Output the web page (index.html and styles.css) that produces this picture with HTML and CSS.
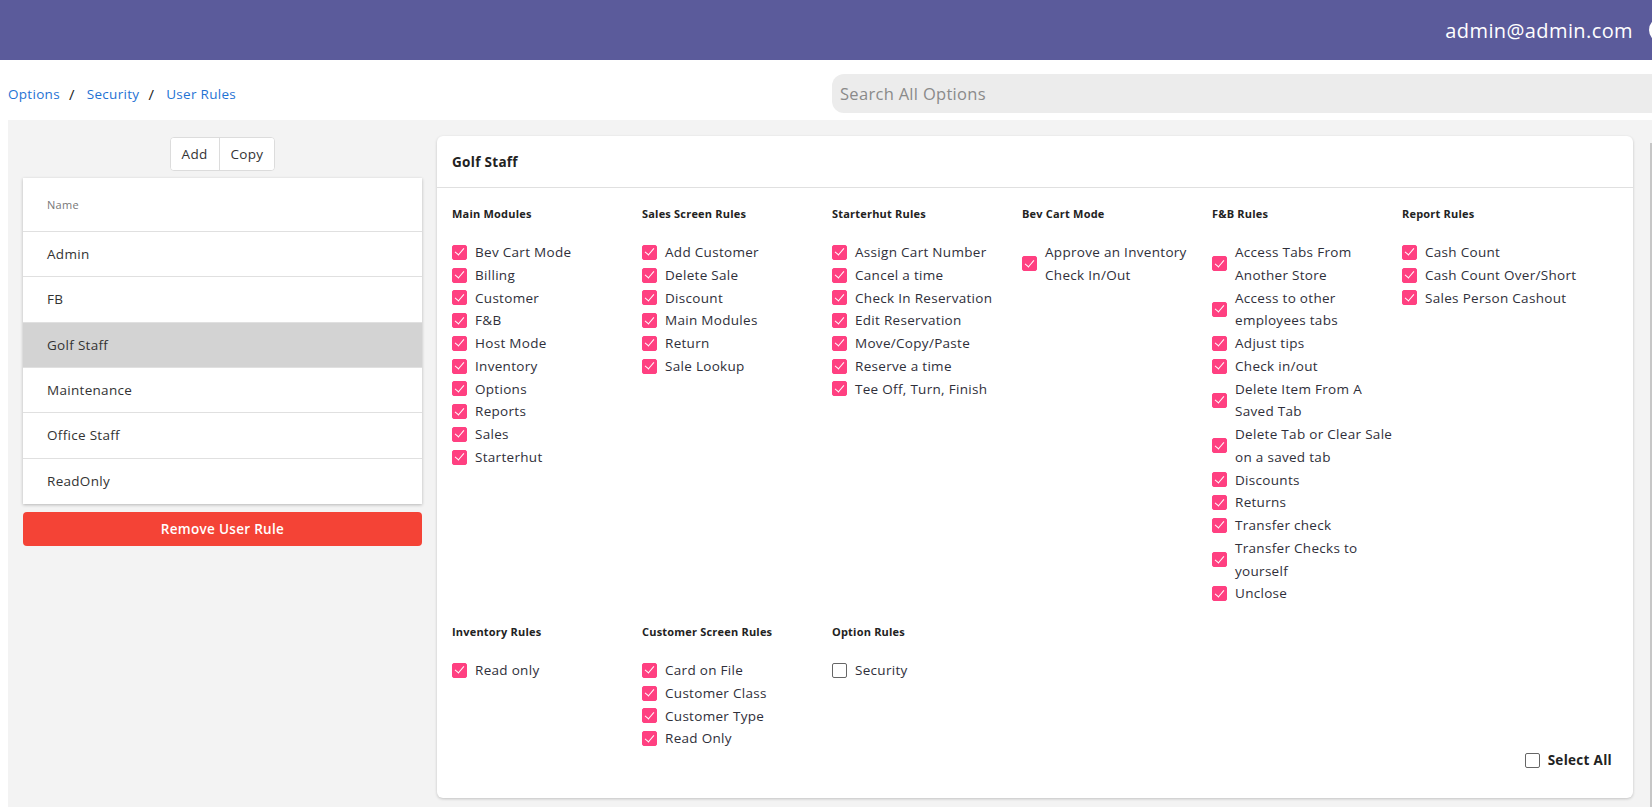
FILE: index.html
```html
<!DOCTYPE html>
<html lang="en">
<head>
    <meta charset="UTF-8">
    <title>Options - User Rules</title>
    <link rel="stylesheet" href="styles.css">
</head>
<body>
    <!-- Top bar -->
    <header class="topbar">
        <span class="user-email">admin@admin.com</span>
        <span class="avatar"></span>
    </header>

    <div class="page">
        <div class="toolbar">
            <nav class="breadcrumb">
                <a href="#">Options</a>
                <span class="sep">/</span>
                <a href="#">Security</a>
                <span class="sep">/</span>
                <a href="#">User Rules</a>
            </nav>
            <div class="search">
                <input type="text" placeholder="Search All Options">
            </div>
        </div>

        <div class="workspace">
            <!-- Rule list -->
            <aside class="rules-side">
                <div class="btn-group">
                    <button class="btn-plain">Add</button>
                    <button class="btn-plain">Copy</button>
                </div>
                <div class="list-card">
                    <div class="list-head">Name</div>
                    <div class="list-row">Admin</div>
                    <div class="list-row">FB</div>
                    <div class="list-row selected">Golf Staff</div>
                    <div class="list-row">Maintenance</div>
                    <div class="list-row">Office Staff</div>
                    <div class="list-row">ReadOnly</div>
                </div>
                <button class="btn-remove">Remove User Rule</button>
            </aside>

            <!-- Rule details -->
            <section class="rule-card">
                <div class="rule-card-title">Golf Staff</div>
                <div class="rule-card-body">
                    <div class="rule-grid">
                        <div class="rule-group">
                            <h4>Main Modules</h4>
                            <label class="rule-item"><span class="cb on"></span><span>Bev Cart Mode</span></label>
                            <label class="rule-item"><span class="cb on"></span><span>Billing</span></label>
                            <label class="rule-item"><span class="cb on"></span><span>Customer</span></label>
                            <label class="rule-item"><span class="cb on"></span><span>F&amp;B</span></label>
                            <label class="rule-item"><span class="cb on"></span><span>Host Mode</span></label>
                            <label class="rule-item"><span class="cb on"></span><span>Inventory</span></label>
                            <label class="rule-item"><span class="cb on"></span><span>Options</span></label>
                            <label class="rule-item"><span class="cb on"></span><span>Reports</span></label>
                            <label class="rule-item"><span class="cb on"></span><span>Sales</span></label>
                            <label class="rule-item"><span class="cb on"></span><span>Starterhut</span></label>
                        </div>
                        <div class="rule-group">
                            <h4>Sales Screen Rules</h4>
                            <label class="rule-item"><span class="cb on"></span><span>Add Customer</span></label>
                            <label class="rule-item"><span class="cb on"></span><span>Delete Sale</span></label>
                            <label class="rule-item"><span class="cb on"></span><span>Discount</span></label>
                            <label class="rule-item"><span class="cb on"></span><span>Main Modules</span></label>
                            <label class="rule-item"><span class="cb on"></span><span>Return</span></label>
                            <label class="rule-item"><span class="cb on"></span><span>Sale Lookup</span></label>
                        </div>
                        <div class="rule-group">
                            <h4>Starterhut Rules</h4>
                            <label class="rule-item"><span class="cb on"></span><span>Assign Cart Number</span></label>
                            <label class="rule-item"><span class="cb on"></span><span>Cancel a time</span></label>
                            <label class="rule-item"><span class="cb on"></span><span>Check In Reservation</span></label>
                            <label class="rule-item"><span class="cb on"></span><span>Edit Reservation</span></label>
                            <label class="rule-item"><span class="cb on"></span><span>Move/Copy/Paste</span></label>
                            <label class="rule-item"><span class="cb on"></span><span>Reserve a time</span></label>
                            <label class="rule-item"><span class="cb on"></span><span>Tee Off, Turn, Finish</span></label>
                        </div>
                        <div class="rule-group">
                            <h4>Bev Cart Mode</h4>
                            <label class="rule-item"><span class="cb on"></span><span>Approve an Inventory Check In/Out</span></label>
                        </div>
                        <div class="rule-group">
                            <h4>F&amp;B Rules</h4>
                            <label class="rule-item"><span class="cb on"></span><span>Access Tabs From Another Store</span></label>
                            <label class="rule-item"><span class="cb on"></span><span>Access to other employees tabs</span></label>
                            <label class="rule-item"><span class="cb on"></span><span>Adjust tips</span></label>
                            <label class="rule-item"><span class="cb on"></span><span>Check in/out</span></label>
                            <label class="rule-item"><span class="cb on"></span><span>Delete Item From A Saved Tab</span></label>
                            <label class="rule-item"><span class="cb on"></span><span>Delete Tab or Clear Sale on a saved tab</span></label>
                            <label class="rule-item"><span class="cb on"></span><span>Discounts</span></label>
                            <label class="rule-item"><span class="cb on"></span><span>Returns</span></label>
                            <label class="rule-item"><span class="cb on"></span><span>Transfer check</span></label>
                            <label class="rule-item"><span class="cb on"></span><span>Transfer Checks to yourself</span></label>
                            <label class="rule-item"><span class="cb on"></span><span>Unclose</span></label>
                        </div>
                        <div class="rule-group">
                            <h4>Report Rules</h4>
                            <label class="rule-item"><span class="cb on"></span><span>Cash Count</span></label>
                            <label class="rule-item"><span class="cb on"></span><span>Cash Count Over/Short</span></label>
                            <label class="rule-item"><span class="cb on"></span><span>Sales Person Cashout</span></label>
                        </div>

                        <div class="rule-group">
                            <h4>Inventory Rules</h4>
                            <label class="rule-item"><span class="cb on"></span><span>Read only</span></label>
                        </div>
                        <div class="rule-group">
                            <h4>Customer Screen Rules</h4>
                            <label class="rule-item"><span class="cb on"></span><span>Card on File</span></label>
                            <label class="rule-item"><span class="cb on"></span><span>Customer Class</span></label>
                            <label class="rule-item"><span class="cb on"></span><span>Customer Type</span></label>
                            <label class="rule-item"><span class="cb on"></span><span>Read Only</span></label>
                        </div>
                        <div class="rule-group">
                            <h4>Option Rules</h4>
                            <label class="rule-item"><span class="cb"></span><span>Security</span></label>
                        </div>
                    </div>

                    <div class="select-all">
                        <label class="rule-item"><span class="cb"></span><span>Select All</span></label>
                    </div>
                </div>
            </section>

            <div class="scroll-thumb"></div>
        </div>
    </div>
</body>
</html>
```

FILE: styles.css
```css
* {
    margin: 0;
    padding: 0;
    box-sizing: border-box;
}

html, body {
    height: 100%;
    overflow: hidden;
}

body {
    font-family: "Open Sans", "Noto Sans", sans-serif;
    background: #ffffff;
    color: #2f2f3a;
    font-size: 13.5px;
    letter-spacing: 0.3px;
}

/* Top bar */
.topbar {
    height: 60px;
    background: #5b5b9b;
    display: flex;
    align-items: center;
    justify-content: flex-end;
    overflow: hidden;
}

.user-email {
    color: #ffffff;
    font-size: 20px;
    font-weight: 500;
    letter-spacing: 0.4px;
}

.avatar {
    width: 26px;
    height: 26px;
    border-radius: 50%;
    border: 3px solid #ffffff;
    margin-left: 16px;
    margin-right: -23px;
    flex-shrink: 0;
}

/* Page */
.page {
    padding-left: 8px;
    height: calc(100% - 60px);
    display: flex;
    flex-direction: column;
}

.toolbar {
    height: 60px;
    padding-top: 14px;
    display: flex;
    align-items: flex-start;
    overflow: hidden;
}

.breadcrumb {
    display: flex;
    align-items: center;
    padding-top: 10px;
    font-size: 13.5px;
}

.breadcrumb a {
    color: #1f73d4;
    text-decoration: none;
}

.breadcrumb .sep {
    color: #222;
    font-size: 15px;
    margin: 0 12px 0 9px;
}

.search {
    margin-left: auto;
    flex: 0 0 840px;
    margin-right: -20px;
}

.search input {
    width: 100%;
    height: 39px;
    border: none;
    border-radius: 12px;
    background: #ececec;
    padding: 0 8px;
    font-family: inherit;
    font-size: 16.5px;
    letter-spacing: 0.3px;
    color: #333;
    outline: none;
}

.search input::placeholder {
    color: #8a8a8a;
}

/* Gray work area */
.workspace {
    position: relative;
    flex: 1;
    background: #f3f3f3;
    display: flex;
    align-items: flex-start;
    gap: 15px;
    padding: 16px 19px 0 15px;
}

.scroll-thumb {
    position: absolute;
    right: 0;
    top: 23px;
    bottom: 0;
    width: 2px;
    background: #c6c6c6;
}

/* Left column */
.rules-side {
    width: 399px;
    flex-shrink: 0;
    display: flex;
    flex-direction: column;
    align-items: center;
}

.btn-group {
    display: flex;
    margin-top: 1px;
    border: 1px solid #dcdcdc;
    border-radius: 4px;
    background: #ffffff;
    overflow: hidden;
}

.btn-plain {
    height: 32px;
    padding: 0 11px;
    border: none;
    background: #ffffff;
    font-family: inherit;
    font-size: 13.5px;
    letter-spacing: 0.3px;
    color: #333;
    cursor: pointer;
}

.btn-plain + .btn-plain {
    border-left: 1px solid #dcdcdc;
}

.list-card {
    width: 100%;
    margin-top: 7px;
    background: #ffffff;
    box-shadow: 0 1px 3px rgba(0, 0, 0, 0.25);
}

.list-head {
    height: 54px;
    display: flex;
    align-items: center;
    padding-left: 24px;
    font-size: 11px;
    color: #777;
    border-bottom: 1px solid #e0e0e0;
}

.list-row {
    height: 45.33px;
    display: flex;
    align-items: center;
    padding-left: 24px;
    color: #333;
    border-bottom: 1px solid #e0e0e0;
}

.list-row:last-child {
    border-bottom: none;
}

.list-row.selected {
    background: #d3d3d3;
}

.btn-remove {
    width: 100%;
    height: 34px;
    margin-top: 8px;
    border: none;
    border-radius: 4px;
    background: #f44336;
    color: #ffffff;
    font-family: inherit;
    font-size: 13.5px;
    font-weight: 600;
    letter-spacing: 0.3px;
    cursor: pointer;
}

/* Rule card */
.rule-card {
    flex: 1;
    height: 662px;
    background: #ffffff;
    border-radius: 6px;
    box-shadow: 0 1px 3px rgba(0, 0, 0, 0.2);
}

.rule-card-title {
    height: 52px;
    display: flex;
    align-items: center;
    padding-left: 15px;
    font-weight: 700;
    color: #222;
    border-bottom: 1px solid #e0e0e0;
}

.rule-card-body {
    padding: 18px 21px 0 15px;
}

.rule-grid {
    display: grid;
    grid-template-columns: repeat(6, 190px);
    row-gap: 19px;
    align-items: start;
}

.rule-group h4 {
    font-size: 11px;
    font-weight: 700;
    line-height: 16px;
    letter-spacing: 0.2px;
    color: #222;
    margin-bottom: 19px;
}

.rule-item {
    display: flex;
    align-items: center;
    gap: 8px;
    width: 183px;
    line-height: 22.75px;
    color: #2f2f3a;
    cursor: pointer;
}

/* Checkbox */
.cb {
    position: relative;
    width: 15px;
    height: 15px;
    flex-shrink: 0;
    border: 1.5px solid #666;
    border-radius: 2px;
    background: #ffffff;
}

.cb.on {
    border-color: #ff4081;
    background: #ff4081;
}

.cb.on::after {
    content: "";
    position: absolute;
    left: 3.5px;
    top: 0.5px;
    width: 4px;
    height: 8px;
    border: solid #ffffff;
    border-width: 0 1.5px 1.5px 0;
    transform: rotate(40deg);
}

.select-all {
    display: flex;
    justify-content: flex-end;
    margin-top: -1px;
}

.select-all .rule-item {
    width: auto;
    font-weight: 700;
    line-height: 22px;
    color: #222;
}
```
